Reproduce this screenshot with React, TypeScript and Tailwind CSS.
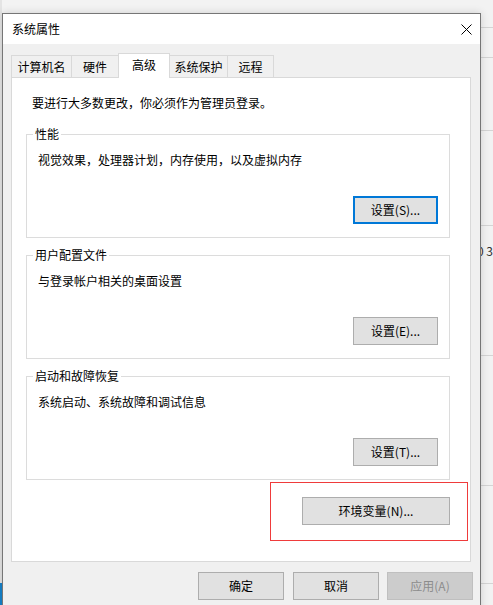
import React from "react";

function Btn({
  label,
  w = 85,
  focused = false,
  disabled = false,
  className = "",
}: {
  label: string;
  w?: number;
  focused?: boolean;
  disabled?: boolean;
  className?: string;
}) {
  const base =
    "h-[28px] flex items-center justify-center text-[12px] leading-[16px] shrink-0";
  const tone = disabled
    ? "bg-[#cccccc] border border-[#bfbfbf] text-[#8c8c8c]"
    : focused
    ? "bg-[#e1e1e1] border-2 border-[#0078d7] text-black"
    : "bg-[#e1e1e1] border border-[#adadad] text-black";
  return (
    <div className={`${base} ${tone} ${className}`} style={{ width: w }}>
      {label}
    </div>
  );
}

function Group({
  title,
  desc,
  btn,
  focused = false,
  className = "",
}: {
  title: string;
  desc: string;
  btn: string;
  focused?: boolean;
  className?: string;
}) {
  return (
    <div
      className={`relative ml-[14px] w-[424px] h-[104px] border border-[#dcdcdc] flex flex-col ${className}`}
    >
      <div className="absolute left-[6px] top-[-9px] bg-white px-[2px] text-[12px] leading-[16px] text-black">
        {title}
      </div>
      <div className="pl-[11px] pt-[17px] text-[12px] leading-[16px] text-black">
        {desc}
      </div>
      <div className="mt-auto self-end mr-[11px] mb-[13px]">
        <Btn label={btn} w={85} focused={focused} />
      </div>
    </div>
  );
}

export default function App() {
  const tabs = [
    { label: "计算机名", w: 61 },
    { label: "硬件", w: 48 },
    { label: "高级", w: 52, active: true },
    { label: "系统保护", w: 59 },
    { label: "远程", w: 47 },
  ];
  const stripLines = [27, 57, 130, 225, 355, 485, 583];
  return (
    <div className="relative w-[493px] h-[605px] overflow-hidden bg-[#f3f3f3] font-['Noto_Sans_CJK_SC','Noto_Sans',sans-serif]">
      {/* background window on the right */}
      <div className="absolute left-[470px] top-0 w-[23px] h-[605px] bg-[#f2f2f2]">
        {stripLines.map((y) => (
          <div
            key={y}
            className="absolute left-0 w-full h-px bg-[#d4d4d4]"
            style={{ top: y }}
          />
        ))}
        <div className="absolute left-[7px] top-[243px] text-[12px] leading-[16px] text-[#333] whitespace-nowrap">
          0 3
        </div>
      </div>
      {/* left edge */}
      <div className="absolute left-0 top-0 w-[2px] h-[605px] bg-[#e4e4e4]" />
      <div className="absolute left-0 top-[583px] w-[2px] h-[22px] bg-[#1683cc]" />

      {/* dialog */}
      <div className="absolute left-[2px] top-[13px] w-[479px] h-[600px] border border-[#767676] bg-[#f0f0f0] flex flex-col shadow-[0_0_8px_rgba(0,0,0,0.15)]">
        {/* title bar */}
        <div className="h-[30px] bg-white flex items-center justify-between pl-[9px] pr-[8px] shrink-0">
          <span className="text-[12px] leading-[16px] text-black">系统属性</span>
          <svg width="11" height="11" viewBox="0 0 11 11" className="mt-[1px]">
            <path d="M0.5 0.5 L10.5 10.5 M10.5 0.5 L0.5 10.5" stroke="#000" strokeWidth="1" fill="none" />
          </svg>
        </div>

        {/* body */}
        <div className="flex-1 flex flex-col pl-[8px]">
          {/* tabs */}
          <div className="mt-[9px] h-[24px] flex items-end">
            {tabs.map((t, i) => (
              <div
                key={t.label}
                className={
                  t.active
                    ? "relative z-10 h-[25px] mb-[-1px] -ml-px bg-white border border-b-0 border-[#d9d9d9] flex items-center justify-center pb-[2px] text-[12px] leading-[16px] text-black"
                    : `h-[22px] ${i > 0 ? "-ml-px" : ""} bg-[#f0f0f0] border border-b-0 border-[#d9d9d9] flex items-center justify-center pt-[1px] text-[12px] leading-[16px] text-black`
                }
                style={{ width: t.w }}
              >
                {t.label}
              </div>
            ))}
          </div>

          {/* panel */}
          <div className="w-[460px] h-[485px] border border-[#d9d9d9] bg-white flex flex-col">
            <div className="pl-[20px] pt-[17px] text-[12px] leading-[16px] text-black">
              要进行大多数更改，你必须作为管理员登录。
            </div>
            <Group
              className="mt-[23px]"
              title="性能"
              desc="视觉效果，处理器计划，内存使用，以及虚拟内存"
              btn="设置(S)..."
              focused
            />
            <Group
              className="mt-[17px]"
              title="用户配置文件"
              desc="与登录帐户相关的桌面设置"
              btn="设置(E)..."
            />
            <Group
              className="mt-[17px]"
              title="启动和故障恢复"
              desc="系统启动、系统故障和调试信息"
              btn="设置(T)..."
            />
            <div className="ml-[258px] mt-[2px] w-[198px] h-[59px] border border-[#ef3b3b] pl-[31px] pt-[14px]">
              <Btn label="环境变量(N)..." w={148} />
            </div>
          </div>

          {/* bottom buttons */}
          <div className="mt-[10px] ml-[187px] flex">
            <Btn label="确定" w={86} />
            <Btn label="取消" w={86} className="ml-[9px]" />
            <Btn label="应用(A)" w={86} disabled className="ml-[8px]" />
          </div>
        </div>
      </div>
    </div>
  );
}
